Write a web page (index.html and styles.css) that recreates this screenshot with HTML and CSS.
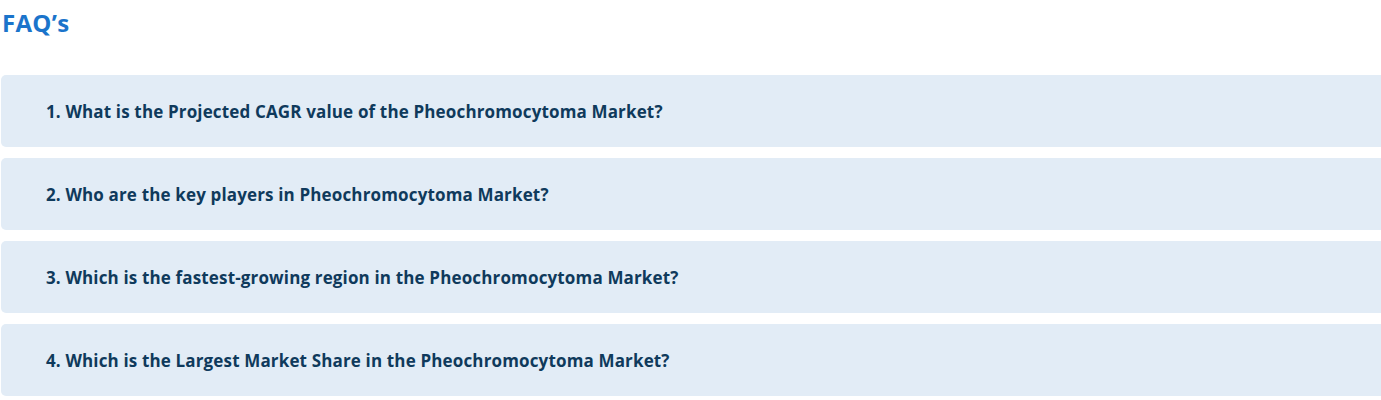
FILE: index.html
```html
<!DOCTYPE html>
<html lang="en">
<head>
    <meta charset="UTF-8">
    <meta name="viewport" content="width=device-width, initial-scale=1.0">
    <title>FAQ's</title>
    <link rel="stylesheet" href="styles.css">
</head>
<body>
    <section class="faq">
        <h2>FAQ’s</h2>
        <div class="faq-list">
            <div class="faq-item">1. What is the Projected CAGR value of the Pheochromocytoma Market?</div>
            <div class="faq-item">2. Who are the key players in Pheochromocytoma Market?</div>
            <div class="faq-item">3. Which is the fastest-growing region in the Pheochromocytoma Market?</div>
            <div class="faq-item">4. Which is the Largest Market Share in the Pheochromocytoma Market?</div>
        </div>
    </section>
</body>
</html>
```

FILE: styles.css
```css
body {
    font-family: "Open Sans", Lato, sans-serif;
    margin: 0;
    padding: 0;
    background-color: #ffffff;
    overflow-x: hidden;
}
.faq {
    padding: 0 0 0 1px;
}
.faq h2 {
    margin: 0;
    padding: 8px 0 0 1px;
    font-size: 24px;
    font-weight: 700;
    color: #1b74cb;
    line-height: 30px;
    letter-spacing: 0.3px;
}
.faq-list {
    margin-top: 37px;
    display: flex;
    flex-direction: column;
    gap: 11px;
    width: calc(100% + 20px);
}
.faq-item {
    background-color: #e2ecf6;
    border-radius: 5px;
    height: 72px;
    box-sizing: border-box;
    padding: 0 0 0 45px;
    display: flex;
    align-items: center;
    font-size: 17px;
    font-weight: 700;
    letter-spacing: 0.15px;
    color: #0f3a5c;
}
```
